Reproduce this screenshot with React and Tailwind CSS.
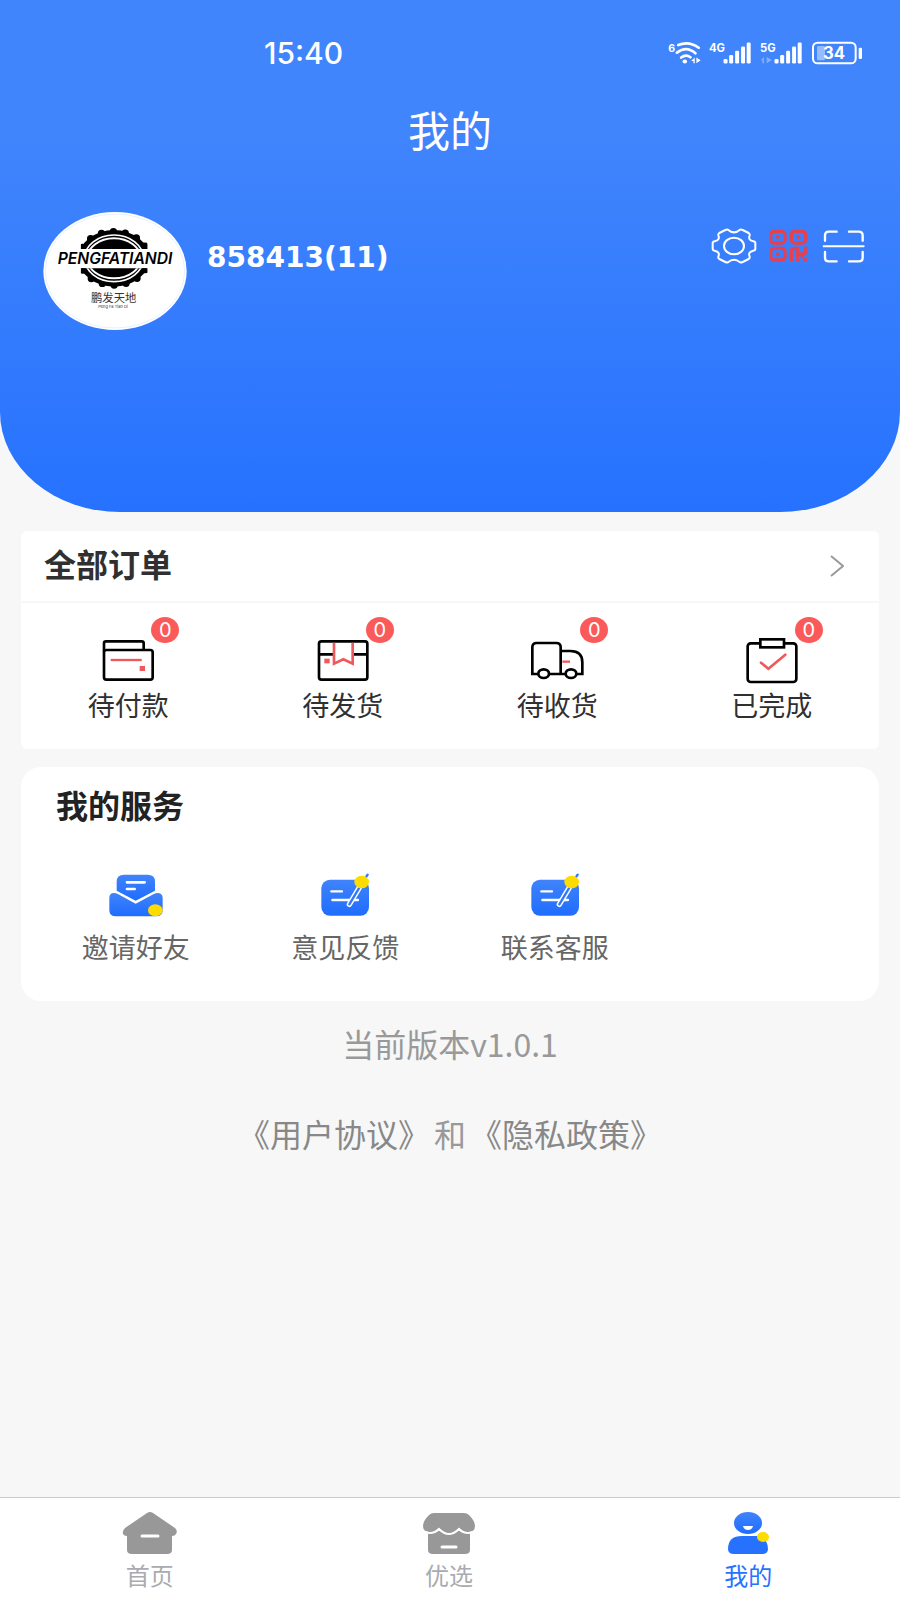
import React from 'react';

const BARS = [
  { x: 50, y: 118 },
  { x: 67, y: 106 },
  { x: 85, y: 93 },
  { x: 103, y: 80 },
  { x: 120, y: 68 }
];

const WifiStatus = () => (
  <svg viewBox="88 64 100 72" className="w-[33px] h-6" fill="none" stroke="#fff" strokeLinecap="round">
    <text x="89" y="96" fontSize="32" fontWeight="700" fill="#fff" stroke="none">6</text>
    <path d="M119 76Q151 63 181 84M115 99Q144 77 171 101M128 114Q142 102 156 113" strokeWidth="8" />
    <ellipse cx="139" cy="126" rx="7" ry="6" fill="#fff" stroke="none" />
    <path d="M158 124L169 114V131H165V124ZM174 114V131L187 122Z" fill="#fff" stroke="none" />
  </svg>
);

const SignalStatus = ({ label, idle }) => (
  <svg viewBox="0 64 130 72" className="w-[43px] h-6" fill="#fff">
    <text x="0" y="97" fontSize="34" fontWeight="700">{label}</text>
    {idle && <path d="M2 122L12 112V131H7V122ZM20 112V131L36 121Z" opacity="0.35" />}
    {BARS.map((bar) => (
      <rect key={bar.x} x={bar.x - 6} y={bar.y} width="12" height={132 - bar.y} rx="4" />
    ))}
  </svg>
);

const BatteryStatus = () => (
  <svg viewBox="512 64 156 72" className="w-[52px] h-6" fill="#fff">
    <rect x="518" y="69" width="128" height="62" rx="14" fill="none" stroke="#fff" strokeWidth="6" />
    <rect x="530" y="79" width="24" height="43" rx="4" opacity="0.45" />
    <rect x="655" y="84" width="10" height="34" rx="4" />
    <text x="581" y="118" fontSize="50" fontWeight="700" textAnchor="middle">34</text>
  </svg>
);

const Avatar = () => (
  <svg viewBox="38 36 432 354" className="w-36 h-[118px] shrink-0" role="img" aria-label="鹏发天地">
    <defs>
      <clipPath id="seal">
        <rect x="151" y="70" width="201" height="77" />
        <rect x="151" y="205" width="201" height="77" />
      </clipPath>
    </defs>
    <ellipse cx="254" cy="213" rx="215" ry="177" fill="#fff" />
    <ellipse cx="254" cy="213" rx="209" ry="171" fill="none" stroke="#dbeafe" strokeWidth="2" />
    <g clipPath="url(#seal)">
      <ellipse cx="251" cy="175" rx="106" ry="85" fill="#000" />
      <ellipse cx="251" cy="175" rx="104" ry="80" fill="none" stroke="#000" strokeWidth="22" strokeLinecap="round" strokeDasharray="0 36" />
      <ellipse cx="251" cy="175" rx="88" ry="70" fill="none" stroke="#fff" strokeWidth="5" />
      <ellipse cx="251" cy="175" rx="80" ry="60" fill="none" stroke="#fff" strokeWidth="6" />
    </g>
    <text x="254" y="192" fontSize="47" fontWeight="600" fontStyle="italic" textAnchor="middle">PENGFATIANDI</text>
    <text x="250" y="306" fontSize="34" textAnchor="middle" fill="#333">鹏发天地</text>
    <text x="248" y="325" fontSize="12" textAnchor="middle" fill="#333">Peng Fa Tian Di</text>
  </svg>
);

const GearIcon = () => (
  <svg viewBox="62 48 144 111" className="w-12 h-[37px]" fill="none" stroke="#fff" strokeWidth="6" strokeLinejoin="round">
    <path d="M116 56Q134 72 152 56Q156 55 160 57L178 66Q182 69 181 73Q175 87 192 91Q198 92 198 97V113Q198 118 192 119Q175 123 181 137Q182 141 178 144L160 153Q156 155 152 154Q134 139 116 154Q112 155 108 153L90 144Q86 141 87 137Q93 123 76 119Q70 118 70 113V97Q70 92 76 91Q93 87 87 73Q86 69 90 66L108 57Q112 55 116 56Z" />
    <ellipse cx="134" cy="105" rx="30" ry="25" />
  </svg>
);

const QrIcon = () => (
  <svg viewBox="242 54 120 105" className="w-10 h-[35px]" fill="none" stroke="#e4404f" strokeWidth="10">
    <rect x="244" y="64" width="43" height="35" rx="10" />
    <rect x="306" y="64" width="43" height="35" rx="10" />
    <rect x="244" y="115" width="43" height="35" rx="10" />
    <path d="M265 76V87M327 76V87M265 127V138M260 81H271M322 81H333M260 132H271" strokeWidth="6" />
    <path d="M306 154V123Q306 115 314 115H324V128M349 110V124Q349 132 341 132H325V142" />
    <path d="M320 149H330M343 149H353M334 141H343" strokeWidth="9" />
  </svg>
);

const ScanIcon = () => (
  <svg viewBox="396 50 132 108" className="w-11 h-9" fill="none" stroke="#fff" strokeWidth="7" strokeLinecap="round">
    <path d="M405 88V72Q405 61 417 61H440M477 61H506Q518 61 518 72V88M405 122V139Q405 150 417 150H440M477 150H506Q518 150 518 139V122" />
    <path d="M401 105H521" strokeWidth="6" />
  </svg>
);

const PayIcon = () => (
  <svg viewBox="303 348 162 144" className="w-[54px] h-12" fill="none" stroke="#000" strokeWidth="8">
    <path d="M312 395V370Q312 364 318 364H425Q431 364 431 370V390" />
    <rect x="312" y="390" width="146" height="89" rx="7" />
    <path d="M332 420H425" stroke="#f0595c" strokeWidth="7" />
    <rect x="419" y="438" width="16" height="15" fill="#f0595c" stroke="none" />
  </svg>
);

const PackIcon = () => (
  <svg viewBox="947 348 162 144" className="w-[54px] h-12" fill="none" stroke="#000" strokeWidth="8">
    <rect x="956" y="364" width="145" height="115" rx="7" />
    <path d="M956 403H998M1060 403H1101" />
    <path d="M1001 368V431L1029 418L1057 431V368" stroke="#f0595c" />
    <rect x="972" y="416" width="16" height="14" fill="#f0595c" stroke="none" />
  </svg>
);

const TruckIcon = () => (
  <svg viewBox="243 348 162 144" className="w-[54px] h-12" fill="none" stroke="#000" strokeWidth="8">
    <path d="M268 462H250V382Q250 369 263 369H322Q335 369 335 382V462M335 393H364Q400 393 400 427V462H382M300 462H350" />
    <ellipse cx="284" cy="461" rx="16" ry="13" />
    <ellipse cx="366" cy="461" rx="16" ry="13" />
    <path d="M340 425H363" stroke="#f0595c" strokeWidth="7" />
  </svg>
);

const DoneIcon = () => (
  <svg viewBox="887 348 162 144" className="w-[54px] h-12" fill="none" stroke="#000" strokeWidth="8">
    <rect x="895" y="370" width="146" height="116" rx="9" />
    <rect x="933" y="358" width="71" height="24" fill="#fff" />
    <path d="M935 428L957 446L1008 404" stroke="#f0595c" strokeLinecap="round" />
  </svg>
);

const BlueGradient = ({ id }) => (
  <defs>
    <linearGradient id={id} x1="0" y1="0" x2="0" y2="1">
      <stop offset="0" stopColor="#4083fb" />
      <stop offset="1" stopColor="#1f6dff" />
    </linearGradient>
  </defs>
);

const InviteIcon = () => (
  <svg viewBox="325 338 168 135" className="w-14 h-[45px]">
    <BlueGradient id="invite" />
    <path d="M351 391V364Q351 343 373 343H444Q466 343 466 364V391L408 421Z" fill="url(#invite)" />
    <path d="M329 413Q329 398 343 398Q349 398 356 402L408 430L461 402Q468 398 475 398Q489 399 489 413V450Q489 468 469 468H349Q329 468 329 450Z" fill="url(#invite)" />
    <path d="M382 366H435M382 386H405" stroke="#fff" strokeWidth="8" strokeLinecap="round" />
    <ellipse cx="467" cy="450" rx="22" ry="18" fill="#ffdc00" />
  </svg>
);

const NoteIcon = ({ id }) => (
  <svg viewBox="950 338 168 135" className="w-14 h-[45px]" strokeLinecap="round">
    <BlueGradient id={id} />
    <rect x="963" y="358" width="143" height="108" rx="26" fill={`url(#${id})`} />
    <path d="M993 393H1025M996 419H1073" stroke="#fff" strokeWidth="7" />
    <path d="M1077 382L1047 432" stroke="#fff" strokeWidth="16" />
    <path d="M1077 382L1047 432" stroke="#2f78fd" strokeWidth="7" />
    <path d="M1098 349L1102 343" stroke="#2f78fd" strokeWidth="7" />
    <ellipse cx="1084" cy="365" rx="22" ry="19" fill="#ffdc00" />
  </svg>
);

const HomeIcon = () => (
  <svg viewBox="0 0 58 46" className="w-[58px] h-[46px]" fill="#989898">
    <path d="M26 3Q29 1 32 3L54 18Q57 21 55 24Q54 26 51 26V40Q51 44 46 44H11Q6 44 6 40V26Q3 26 2 24Q1 21 4 18Z" />
    <path d="M21 26H37" stroke="#fff" strokeWidth="3" strokeLinecap="round" />
  </svg>
);

const StoreIcon = () => (
  <svg viewBox="0 0 58 46" className="w-[58px] h-[46px]" fill="#989898">
    <path d="M8 20H50V40Q50 44 45 44H13Q8 44 8 40Z" />
    <path d="M14 3H44Q47 3 49 5Q55 11 55 16Q55 22 48 22Q43 22 39 18Q34 23 29 23Q24 23 19 18Q15 22 10 22Q3 22 3 16Q3 11 9 5Q11 3 14 3Z" />
    <path d="M6 22Q8 23 10 23Q15 23 19 19Q24 24 29 24Q34 24 39 19Q43 23 48 23Q50 23 52 22" fill="none" stroke="#fff" strokeWidth="2" />
    <path d="M22 37H36" stroke="#fff" strokeWidth="3" strokeLinecap="round" />
  </svg>
);

const UserIcon = () => (
  <svg viewBox="0 0 58 46" className="w-[58px] h-[46px]">
    <BlueGradient id="user" />
    <ellipse cx="29" cy="13" rx="14" ry="11" fill="url(#user)" />
    <path d="M24 16H34Q33 20 29 20Q25 20 24 16Z" fill="#fff" />
    <path d="M9 39Q9 26 23 26H38Q49 28 49 39Q49 44 43 44H15Q9 44 9 39Z" fill="#2672ff" />
    <ellipse cx="44" cy="27" rx="6" ry="5" fill="#ffdc00" />
  </svg>
);

const orders = [
  { label: '待付款', count: 0, icon: <PayIcon /> },
  { label: '待发货', count: 0, icon: <PackIcon /> },
  { label: '待收货', count: 0, icon: <TruckIcon /> },
  { label: '已完成', count: 0, icon: <DoneIcon /> }
];

const services = [
  { label: '邀请好友', icon: <InviteIcon /> },
  { label: '意见反馈', icon: <NoteIcon id="feedback" /> },
  { label: '联系客服', icon: <NoteIcon id="contact" /> }
];

const tabs = [
  { label: '首页', icon: <HomeIcon /> },
  { label: '优选', icon: <StoreIcon /> },
  { label: '我的', icon: <UserIcon />, active: true }
];

const App = () => {
  return (
    <div className="min-h-screen flex flex-col bg-[#f7f7f7] font-['Inter','Noto_Sans_CJK_SC',sans-serif]">
      <header className="bg-linear-to-b from-[#4185fc] from-25% to-[#2672ff] rounded-b-[120px_100px] pb-[182px] text-white">
        {/* Status bar */}
        <div className="flex items-center justify-between h-[106px] pl-66 pr-[37px]">
          <time className="text-[30px] font-medium">15:40</time>
          <div className="flex items-center gap-2">
            <WifiStatus />
            <SignalStatus label="4G" />
            <SignalStatus label="5G" idle />
            <BatteryStatus />
          </div>
        </div>

        <h1 className="text-center text-[42px] leading-[52px]">我的</h1>

        {/* Profile */}
        <div className="flex items-start mt-[54px] pl-[43px] pr-[34px]">
          <Avatar />
          <p className="ml-5 mt-7 text-[28px] leading-9 font-bold font-['DejaVu_Sans',sans-serif]">858413(11)</p>
          <div className="flex items-center gap-3 ml-auto mt-[15px]">
            <button type="button" aria-label="设置"><GearIcon /></button>
            <button type="button" aria-label="二维码"><QrIcon /></button>
            <button type="button" aria-label="扫一扫"><ScanIcon /></button>
          </div>
        </div>
      </header>

      <main>
        {/* Orders */}
        <section className="mx-[21px] mt-[19px] rounded-md bg-white pb-[22px]">
          <button
            type="button"
            className="flex items-center justify-between w-full h-18 pl-[23px] pr-[35px] border-b-2 border-[#f7f7f7]"
          >
            <span className="text-[32px] leading-10 font-bold text-[#303030]">全部订单</span>
            <svg viewBox="0 0 14 22" className="w-3.5 h-[22px]" fill="none" stroke="#999" strokeWidth="2">
              <path d="M1 1L13 11L1 21" />
            </svg>
          </button>
          <div className="grid grid-cols-4 pt-[33px]">
            {orders.map((order) => (
              <button key={order.label} type="button" className="flex flex-col items-center gap-[3px]">
                <span className="relative">
                  {order.icon}
                  <span className="absolute left-[50px] -top-[19px] flex items-center justify-center w-7 h-[26px] rounded-[50%] bg-[#fa5a5a] text-xl leading-none text-white">
                    {order.count}
                  </span>
                </span>
                <span className="text-[27px] leading-10 text-[#303030]">{order.label}</span>
              </button>
            ))}
          </div>
        </section>

        {/* Services */}
        <section className="mx-[21px] mt-[18px] rounded-[20px] bg-white pt-5 pb-8">
          <h2 className="pl-[35px] text-[32px] leading-10 font-bold text-[#222]">我的服务</h2>
          <div className="grid grid-cols-4 mt-[46px] px-[10px]">
            {services.map((service) => (
              <button key={service.label} type="button" className="flex flex-col items-center gap-[11px]">
                {service.icon}
                <span className="text-[27px] leading-10 text-[#666]">{service.label}</span>
              </button>
            ))}
          </div>
        </section>

        <p className="mt-[22px] text-center text-[32px] leading-10 text-[#999] font-['Noto_Sans_CJK_SC',sans-serif]">当前版本v1.0.1</p>
        <p className="flex justify-center gap-1 mt-[53px] text-[32px] leading-10 text-[#999]">
          <a href="#agreement" className="text-[#888]">《用户协议》</a>
          <span>和</span>
          <a href="#privacy" className="text-[#888]">《隐私政策》</a>
        </p>
      </main>

      {/* Tab bar */}
      <nav className="grid grid-cols-3 mt-auto pt-3 pr-0.5 pb-1 border-t border-[#ccc] bg-white">
        {tabs.map((tab) => (
          <button
            key={tab.label}
            type="button"
            aria-current={tab.active ? 'page' : undefined}
            className={`flex flex-col items-center gap-0.5 text-2xl ${tab.active ? 'text-[#2672ff]' : 'text-[#a9abb0]'}`}
          >
            {tab.icon}
            <span className="leading-[38px]">{tab.label}</span>
          </button>
        ))}
      </nav>
    </div>
  );
};

export default App;
